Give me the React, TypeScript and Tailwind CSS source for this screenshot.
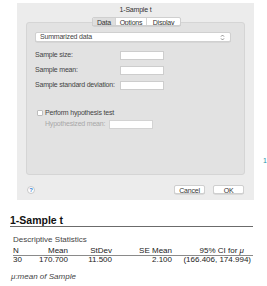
export default function App() {
  const fields = ["Sample size:", "Sample mean:", "Sample standard deviation:"];

  return (
    <div className="h-[286px] w-[267px] overflow-hidden bg-white font-['Liberation_Sans',Arial,sans-serif]">
      <div className="flex pt-[3px]">
        <div className="ml-[17px] flex h-[197px] w-[237px] flex-col bg-[#ececec] tracking-[-0.2px]">
          <div className="h-[14px] text-center text-[7px] leading-[14px] text-[#333]">1-Sample t</div>

          <div className="relative z-10 flex h-[9px] justify-center pl-[2px] text-[7px] leading-[9px] text-[#333]">
            <div className="flex overflow-hidden rounded-[2px] border border-[#cfcfcf] bg-white shadow-[0_0.5px_0.5px_rgba(0,0,0,0.15)]">
              <span className="w-[22px] bg-[#dedede] text-center">Data</span>
              <span className="w-[31px] border-l border-[#d4d4d4] text-center">Options</span>
              <span className="w-[34px] border-l border-[#d4d4d4] text-center">Display</span>
            </div>
          </div>

          <div className="mx-[9px] -mt-[4px] h-[153px] w-[219px] rounded-[3px] border border-[#d5d5d5] bg-[#e2e2e2] pl-[8px] pt-[9px] text-[7px] text-[#444]">
            <div className="flex h-[10px] w-[196px] items-center justify-between rounded-[2px] border border-[#d0d0d0] bg-white pl-[4px] pr-[5px] leading-[10px] shadow-[0_0.5px_0.5px_rgba(0,0,0,0.1)]">
              <span>Summarized data</span>
              <svg width="5" height="7" viewBox="0 0 5 7" fill="none" stroke="#777" strokeWidth="0.8">
                <path d="M1 2.6 2.5 1 4 2.6M1 4.4 2.5 6 4 4.4" />
              </svg>
            </div>

            <div className="mt-[9px] flex flex-col gap-[6px]">
              {fields.map((label) => (
                <div key={label} className="flex h-[9px] items-center">
                  <span className="w-[85px]">{label}</span>
                  <span className="h-[9px] w-[44px] border border-[#cdcdcd] bg-white" />
                </div>
              ))}
            </div>

            <div className="mt-[19px] flex h-[8px] items-center pl-[2px]">
              <span className="h-[6px] w-[6px] rounded-[1px] border border-[#bdbdbd] bg-white" />
              <span className="ml-[2px]">Perform hypothesis test</span>
            </div>
            <div className="mt-[3px] flex h-[9px] items-center pl-[10px] text-[#a8a8a8]">
              <span className="w-[64px]">Hypothesized mean:</span>
              <span className="h-[9px] w-[44px] border border-[#d3d3d3] bg-white" />
            </div>
          </div>

          <div className="mt-[10px] flex h-[9px] items-center justify-between pl-[10px] pr-[10px] text-[7px] leading-[9px] text-[#333]">
            <span className="flex h-[8px] w-[8px] items-center justify-center rounded-full border border-[#c8c8c8] bg-white text-[6px] font-bold leading-none text-[#3a7fd5]">
              ?
            </span>
            <div className="flex gap-[8px]">
              <span className="h-[9px] w-[31px] rounded-[2px] border border-[#cfcfcf] bg-white text-center shadow-[0_0.5px_0.5px_rgba(0,0,0,0.15)]">
                Cancel
              </span>
              <span className="h-[9px] w-[31px] rounded-[2px] border border-[#cfcfcf] bg-white text-center shadow-[0_0.5px_0.5px_rgba(0,0,0,0.15)]">
                OK
              </span>
            </div>
          </div>
        </div>
        <span className="ml-[9px] mt-[154px] text-[7px] leading-[8px] text-[#2a8fa8]">1</span>
      </div>

      <div className="pl-[10px] pr-[14px]">
        <div className="mt-[14px] h-[12px] text-[10.5px] font-bold leading-[12px] text-[#111]">1-Sample t</div>
        <div className="h-[1px] bg-[#6b6b6b]" />
        <div className="pl-[3px] text-[8px] text-[#222]">
          <div className="mt-[8px] leading-[9px] text-[#444]">Descriptive Statistics</div>
          <div className="mt-[2px] grid grid-cols-[20px_35px_44px_60px_79px] border-b border-[#8a8a8a] leading-[9px]">
            <span>N</span>
            <span className="text-right">Mean</span>
            <span className="text-right">StDev</span>
            <span className="text-right">SE Mean</span>
            <span className="pr-[7px] text-right">
              95% CI for <i>μ</i>
            </span>
          </div>
          <div className="grid grid-cols-[20px_35px_44px_60px_79px] leading-[8px]">
            <span>30</span>
            <span className="text-right">170.700</span>
            <span className="text-right">11.500</span>
            <span className="text-right">2.100</span>
            <span className="text-right">(166.406, 174.994)</span>
          </div>
        </div>
        <div className="mt-[8px] pl-[1px] text-[8px] italic leading-[9px] text-[#444]">μ:mean of Sample</div>
      </div>
    </div>
  );
}
